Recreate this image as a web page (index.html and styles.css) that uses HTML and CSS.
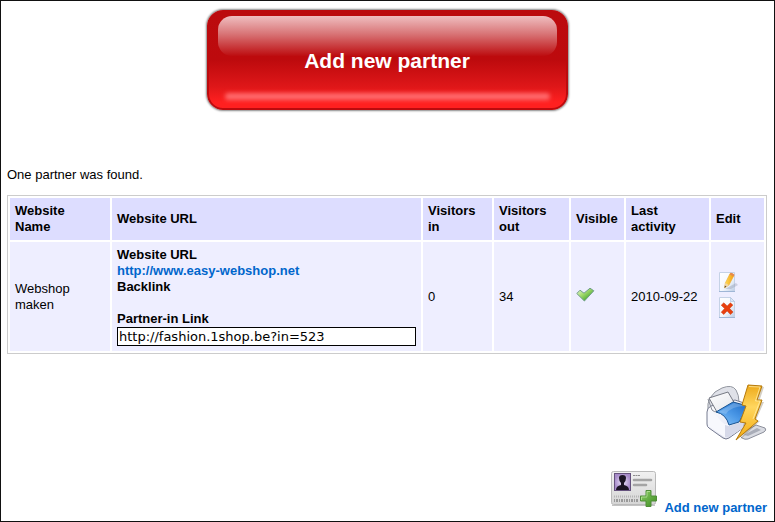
FILE: index.html
```html
<!DOCTYPE html>
<html lang="en">
<head>
<meta charset="utf-8">
<title>Partners</title>
<link rel="stylesheet" href="styles.css">
</head>
<body>
<main class="page">
  <button type="button" class="big-button"><span class="big-button-label">Add new partner</span></button>

  <p class="summary">One partner was found.</p>

  <table class="partners">
    <colgroup>
      <col class="col-name"><col><col class="col-in"><col class="col-out"><col class="col-visible"><col class="col-last"><col class="col-edit">
    </colgroup>
    <thead>
      <tr>
        <th scope="col">Website<br>Name</th>
        <th scope="col">Website URL</th>
        <th scope="col">Visitors in</th>
        <th scope="col">Visitors out</th>
        <th scope="col">Visible</th>
        <th scope="col">Last activity</th>
        <th scope="col">Edit</th>
      </tr>
    </thead>
    <tbody>
      <tr>
        <td>Webshop maken</td>
        <td>
          <dl class="links">
            <dt>Website URL</dt>
            <dd><a href="#site">http://www.easy-webshop.net</a></dd>
            <dt>Backlink</dt>
            <dd></dd>
            <dt><label for="partner-in">Partner-in Link</label></dt>
            <dd><input id="partner-in" type="text" value="http://fashion.1shop.be?in=523"></dd>
          </dl>
        </td>
        <td>0</td>
        <td>34</td>
        <td>
          <svg class="check" viewBox="0 0 20 16" role="img" aria-label="Yes">
            <defs><linearGradient id="green" x1="0" y1="0" x2="1" y2="1"><stop offset="0" stop-color="#f0fbe6"/><stop offset=".4" stop-color="#a6dc70"/><stop offset=".8" stop-color="#43a52d"/><stop offset="1" stop-color="#2a8a20"/></linearGradient></defs>
            <path d="M.8 6.500 4 3.200l4 3L14 1.200l3.800 2.600L8.400 14z" fill="url(#green)" stroke="#6f9d88" stroke-linejoin="round"/>
          </svg>
        </td>
        <td>2010-09-22</td>
        <td>
          <div class="actions">
            <button type="button" class="icon-button" aria-label="Edit">
              <svg viewBox="0 0 24 24">
                <defs>
                  <linearGradient id="paper" x1="0" y1="0" x2="1" y2="1"><stop offset="0" stop-color="#ffffff"/><stop offset=".55" stop-color="#f4f8fd"/><stop offset="1" stop-color="#bccde6"/></linearGradient>
                  <linearGradient id="pencil" x1="0" y1="0" x2="1" y2="0"><stop offset="0" stop-color="#ffe25a"/><stop offset="1" stop-color="#f39b13"/></linearGradient>
                </defs>
                <path d="M3.500 1.500h15v19h-15z" fill="url(#paper)" stroke="#c5d2e6"/>
                <path d="M3 20.500h16" stroke="#9fb6d6"/>
                <path d="M9 18 20 12l2 2-7 4z" fill="#8993a8" opacity=".35"/>
                <path d="m8.500 17 .8-5L14 2.600l4 1.900-5 9.500z" fill="url(#pencil)" stroke="#e8a42c" stroke-width=".5"/>
                <path d="m8.500 17 .8-5 3.700 2z" fill="#f0d7a8"/>
                <path d="m8.500 17 .4-2.400 1.500.9z" fill="#574635"/>
                <path d="m13.600 3.500.9-1.700q2-.3 4 2l-.9 1.600z" fill="#e58a4c"/>
              </svg>
            </button>
            <button type="button" class="icon-button" aria-label="Delete">
              <svg viewBox="0 0 24 24">
                <path d="M3.500 .5h11l4 4v16h-15z" fill="url(#paper)" stroke="#c5d2e6"/>
                <path d="M14.500 .5v4h4z" fill="#dbe7f6" stroke="#a9bddb" stroke-width=".6"/>
                <path d="M3 20.500h16" stroke="#9fb6d6"/>
                <path d="m5.200 8.200 2.600-2.400 3.400 3.200 3.200-3.200 2.500 2.300-3.200 3.400 3.400 3.600-2.600 2.400-3.400-3.600-3.300 3.600-2.600-2.300 3.400-3.700z" fill="#e8400f" stroke="#c93a12" stroke-width=".5" stroke-linejoin="round"/>
              </svg>
            </button>
          </div>
        </td>
      </tr>
    </tbody>
  </table>

  <div class="print-row">
    <button type="button" class="print-button" aria-label="Print">
      <svg viewBox="0 0 62 60">
        <defs>
          <linearGradient id="body" x1="0" y1="0" x2="1" y2="1"><stop offset="0" stop-color="#ffffff"/><stop offset=".5" stop-color="#eceef8"/><stop offset="1" stop-color="#b4b8ce"/></linearGradient>
          <linearGradient id="sheet" x1="0" y1="0" x2="1" y2="1"><stop offset="0" stop-color="#ffffff"/><stop offset="1" stop-color="#e4e5ea"/></linearGradient>
          <linearGradient id="blue" x1="1" y1="0" x2="0" y2="1"><stop offset="0" stop-color="#1a67c4"/><stop offset=".5" stop-color="#4a97e6"/><stop offset="1" stop-color="#8cc8fa"/></linearGradient>
          <linearGradient id="bolt" x1="0" y1="0" x2="0" y2="1"><stop offset="0" stop-color="#eda91a"/><stop offset=".4" stop-color="#ffd65e"/><stop offset="1" stop-color="#f4ad13"/></linearGradient>
        </defs>
        <path d="M34 53 51 43l9 3q2 2-1 4L43 57q-3 1-6-1z" fill="#d9dbe2" stroke="#8c8f9b"/>
        <path d="m39 53 13-7 4 2-13 6z" fill="#a9adb8"/>
        <path d="M3 29q-1-8 2-13 4-7 12-10 10-4 14 2 3 5 3 12L12 32z" fill="#dfe1e8" stroke="#92969f"/>
        <path d="M2 30q0-4 4-6l24-6 15 5v18L24 56q-3 2-6 0L4 46q-2-1-2-4z" fill="url(#body)" stroke="#777c91"/>
        <path d="M3 30q7 1 12 8 4 5 7 4l16-5v9L24 55q-3 2-5 0L5 45q-2-1-2-3z" fill="#f7f8fd"/>
        <path d="M20 43v12q2 1 4 0l17-11v-6L24 44z" fill="#cbcfe2" opacity=".75"/>
        <path d="m4 16 19-6 7 12-18 8z" fill="url(#sheet)" stroke="#777a84"/>
        <path d="m3 17 4 11q2 2 5 2" fill="none" stroke="#868a95"/>
        <path d="M11 30 28 20l15 4-9 16-10 3q-3-11-13-13z" fill="url(#blue)" stroke="#195391"/>
        <path d="m14 30 15-9 12 3q-15 0-20 8z" fill="#fff" opacity=".2"/>
        <path d="m43 3 14 1-5 15h5l-8 18 4 1-20 19 9-14h-6l7-17-4-1z" fill="#70613c" opacity=".3" transform="translate(2 1)"/>
        <path d="m43 3 14 1-5 14h5l-7 19 3 2-22 19 10-17-6-1 6-16-4-1z" fill="url(#bolt)" stroke="#b67a0c" stroke-linejoin="round"/>
        <path d="m44 4.500 11 .5-4.500 14H55l-7 18" fill="none" stroke="#fff0b2" opacity=".7"/>
      </svg>
    </button>
  </div>

  <div class="footer-row">
    <a class="add-link" href="#add">
      <svg class="card" viewBox="0 0 48 38" aria-hidden="true">
        <defs>
          <linearGradient id="cardbg" x1="0" y1="0" x2="0" y2="1"><stop offset="0" stop-color="#f1f1f1"/><stop offset="1" stop-color="#d5d5d5"/></linearGradient>
          <radialGradient id="photo"><stop offset="0" stop-color="#eee6fb"/><stop offset="1" stop-color="#a78bc9"/></radialGradient>
          <linearGradient id="plus" x1="0" y1="0" x2="1" y2="1"><stop offset="0" stop-color="#8ed065"/><stop offset="1" stop-color="#3c8b22"/></linearGradient>
        </defs>
        <rect x="1.500" y="1.500" width="44" height="33" rx="2" fill="url(#cardbg)" stroke="#bababa"/>
        <path d="M2 35.500h43" stroke="#888" opacity=".5"/>
        <rect x="4.500" y="3.500" width="16" height="17" fill="url(#photo)" stroke="#65527d"/>
        <path d="M6 20q0-4 5-5v-2q-2-2-2-5 0-3 3.500-3T16 8q0 3-2 5v2q5 1 5 5z" fill="#1c1524"/>
        <path d="M23 5.500h7" stroke="#8d8d8d" stroke-dasharray="2 .5"/>
        <path d="M24 10h17M24 15h12" stroke="#a4a4a4" stroke-width="2.600" stroke-linecap="round"/>
        <path d="M4 26.500h27" stroke="#b5b5b5" stroke-width="2" stroke-dasharray="1 1"/>
        <path d="M4 30.500h25" stroke="#999" stroke-width="3" stroke-dasharray="1 1 2 1"/>
        <path d="M36 20.500h5v5.500h5.500v5H41v5.500h-5V31h-5.500v-5H36z" fill="url(#plus)" stroke="#4f8e37" stroke-linejoin="round"/>
        <path d="M37 26.500v-5h3M31.500 30v-3H37" fill="none" stroke="#c3eaa8" opacity=".7"/>
      </svg>
      <span>Add new partner</span>
    </a>
  </div>
</main>
</body>
</html>
```
FILE: styles.css
```css
* {
  box-sizing: border-box;
}

body {
  margin: 0;
  background: #fff;
  color: #000;
  font: 13px/16px "Liberation Sans", Arial, sans-serif;
}

.page {
  min-height: 100vh;
  padding: 8px 7px 4px 6px;
  border: 1px solid #111;
  display: flex;
  flex-direction: column;
}

button {
  font: inherit;
  border: 0;
  padding: 0;
  background: none;
  cursor: pointer;
}

svg {
  display: block;
}

a {
  color: #06c;
  font-weight: bold;
  text-decoration: none;
}

.big-button {
  position: relative;
  align-self: center;
  width: 361px;
  height: 100px;
  padding-top: 1px;
  margin-top: 1px;
  border: 2px solid #bb0b0e;
  border-radius: 16px;
  background: linear-gradient(#bb0b0e 0%, #bd0a0d 50%, #df1719 78%, #ff2020 94%);
  box-shadow: 0 0 2px 1px #888;
  color: #fff;
}

.big-button::before {
  content: "";
  position: absolute;
  inset: 4px 9px auto;
  height: 40px;
  border-radius: 14px;
  background: linear-gradient(#efbec0, #d87476 45%, #bd0d10);
}

.big-button::after {
  content: "";
  position: absolute;
  inset: auto 16px 8px;
  height: 7px;
  border-radius: 4px;
  background: #ff6a6c;
  filter: blur(2px);
}

.big-button-label {
  position: relative;
  font-size: 21px;
  line-height: 24px;
  font-weight: bold;
}

.summary {
  margin: 57px 0 12px;
}

.partners {
  width: 100%;
  table-layout: fixed;
  border: 1px solid #ccc;
  border-collapse: separate;
  border-spacing: 2px;
}

.col-name { width: 100px; }
.col-in { width: 69px; }
.col-out { width: 75px; }
.col-visible { width: 53px; }
.col-last { width: 83px; }
.col-edit { width: 53px; }

th,
td {
  padding: 5px;
  text-align: left;
  vertical-align: middle;
}

th {
  background: #ddf;
}

td {
  background: #eef;
}

.links,
.links dd {
  margin: 0;
}

.links dt {
  font-weight: bold;
}

.links dd {
  min-height: 16px;
}

.links input {
  display: block;
  width: 100%;
  height: 19px;
  padding: 0 1px;
  border: 1px solid #000;
  border-radius: 0;
  background: #fff;
  color: #000;
  font: 13px/16px "DejaVu Sans", Verdana, sans-serif;
}

.check {
  width: 20px;
  height: 16px;
  margin-bottom: 4px;
}

.actions {
  display: grid;
  gap: 2px;
  padding-bottom: 2px;
}

.icon-button,
.icon-button svg {
  width: 24px;
  height: 24px;
}

.print-row,
.footer-row {
  display: flex;
  justify-content: flex-end;
}

.print-row {
  margin: 28px 0;
}

.print-button svg {
  width: 62px;
  height: 60px;
}

.add-link {
  display: flex;
  align-items: flex-end;
  gap: 6px;
}

.card {
  width: 48px;
  height: 38px;
  margin-bottom: 8px;
}
```
